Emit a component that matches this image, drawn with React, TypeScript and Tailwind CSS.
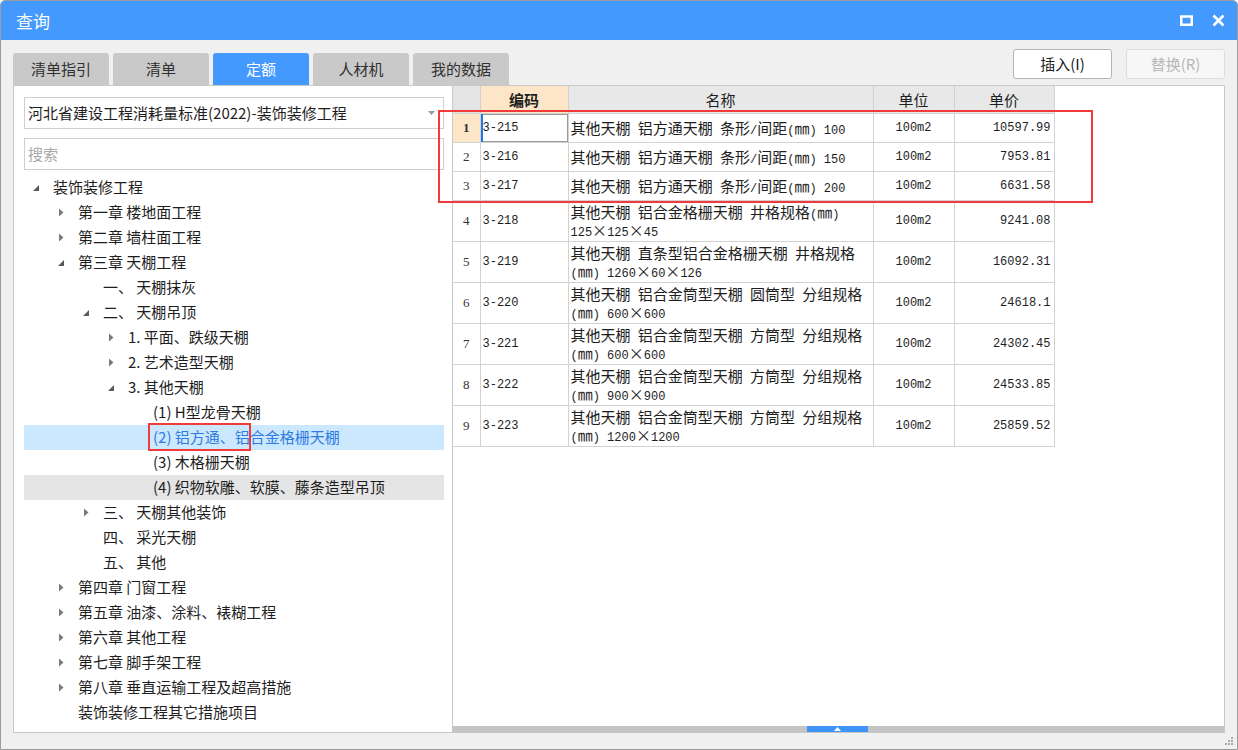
import React from 'react';

type Arrow = 'open' | 'closed' | 'none';

interface TreeNode {
  level: number;
  text: string;
  arrow: Arrow;
  state?: 'selected' | 'hover';
}

const tree: TreeNode[] = [
  { level: 0, text: '装饰装修工程', arrow: 'open' },
  { level: 1, text: '第一章 楼地面工程', arrow: 'closed' },
  { level: 1, text: '第二章 墙柱面工程', arrow: 'closed' },
  { level: 1, text: '第三章 天棚工程', arrow: 'open' },
  { level: 2, text: '一、 天棚抹灰', arrow: 'none' },
  { level: 2, text: '二、 天棚吊顶', arrow: 'open' },
  { level: 3, text: '1. 平面、跌级天棚', arrow: 'closed' },
  { level: 3, text: '2. 艺术造型天棚', arrow: 'closed' },
  { level: 3, text: '3. 其他天棚', arrow: 'open' },
  { level: 4, text: '(1) H型龙骨天棚', arrow: 'none' },
  { level: 4, text: '(2) 铝方通、铝合金格栅天棚', arrow: 'none', state: 'selected' },
  { level: 4, text: '(3) 木格栅天棚', arrow: 'none' },
  { level: 4, text: '(4) 织物软雕、软膜、藤条造型吊顶', arrow: 'none', state: 'hover' },
  { level: 2, text: '三、 天棚其他装饰', arrow: 'closed' },
  { level: 2, text: '四、 采光天棚', arrow: 'none' },
  { level: 2, text: '五、 其他', arrow: 'none' },
  { level: 1, text: '第四章 门窗工程', arrow: 'closed' },
  { level: 1, text: '第五章 油漆、涂料、裱糊工程', arrow: 'closed' },
  { level: 1, text: '第六章 其他工程', arrow: 'closed' },
  { level: 1, text: '第七章 脚手架工程', arrow: 'closed' },
  { level: 1, text: '第八章 垂直运输工程及超高措施', arrow: 'closed' },
  { level: 1, text: '装饰装修工程其它措施项目', arrow: 'none' },
];

interface Row {
  code: string;
  name: string[];
  unit: string;
  price: string;
}

const rows: Row[] = [
  { code: '3-215', name: ['其他天棚 铝方通天棚 条形/间距(㎜) 100'], unit: '100m2', price: '10597.99' },
  { code: '3-216', name: ['其他天棚 铝方通天棚 条形/间距(㎜) 150'], unit: '100m2', price: '7953.81' },
  { code: '3-217', name: ['其他天棚 铝方通天棚 条形/间距(㎜) 200'], unit: '100m2', price: '6631.58' },
  { code: '3-218', name: ['其他天棚 铝合金格栅天棚 井格规格(㎜)', '125×125×45'], unit: '100m2', price: '9241.08' },
  { code: '3-219', name: ['其他天棚 直条型铝合金格栅天棚 井格规格', '(㎜) 1260×60×126'], unit: '100m2', price: '16092.31' },
  { code: '3-220', name: ['其他天棚 铝合金筒型天棚 圆筒型 分组规格', '(㎜) 600×600'], unit: '100m2', price: '24618.1' },
  { code: '3-221', name: ['其他天棚 铝合金筒型天棚 方筒型 分组规格', '(㎜) 600×600'], unit: '100m2', price: '24302.45' },
  { code: '3-222', name: ['其他天棚 铝合金筒型天棚 方筒型 分组规格', '(㎜) 900×900'], unit: '100m2', price: '24533.85' },
  { code: '3-223', name: ['其他天棚 铝合金筒型天棚 方筒型 分组规格', '(㎜) 1200×1200'], unit: '100m2', price: '25859.52' },
];

const tabs = ['清单指引', '清单', '定额', '人材机', '我的数据'];

// ascii runs in a narrow mono face, CJK in the sans face
const Mixed = ({ text }: { text: string }) => (
  <>
    {text.split(/([\x20-\x7e]+)/).map((part, i) =>
      /^[\x20-\x7e]+$/.test(part) ? (
        <span key={i} className="font-['Liberation_Mono',monospace] text-[12px] whitespace-pre">
          {part}
        </span>
      ) : (
        <span key={i}>{part}</span>
      )
    )}
  </>
);

const TreeArrow = ({ kind }: { kind: Arrow }) => {
  if (kind === 'open')
    return (
      <svg width="8" height="8" viewBox="0 0 8 8">
        <polygon points="7,1 7,7 1,7" fill="#5a5a5a" />
      </svg>
    );
  if (kind === 'closed')
    return (
      <svg width="8" height="9" viewBox="0 0 8 9">
        <polygon points="2,0.5 6.5,4.5 2,8.5" fill="#7a7a7a" />
      </svg>
    );
  return null;
};

const levelPad = ['pl-[8px]', 'pl-[33px]', 'pl-[58px]', 'pl-[83px]', 'pl-[108px]'];

export default function App() {
  return (
    <div className="relative w-[1238px] h-[750px] overflow-hidden bg-[#f0f0f0] border border-[#9c9c9c] rounded-t-[5px] flex flex-col font-['Noto_Sans_CJK_SC','Noto_Sans',sans-serif] text-[#1e1e1e]">
      {/* title bar */}
      <div className="h-[39px] shrink-0 bg-[#4499ff] flex items-center justify-between pl-[15px] pr-[12px]">
        <span className="text-white text-[17px]">查询</span>
        <div className="flex items-center gap-[19px]">
          <svg width="13" height="11" viewBox="0 0 13 11">
            <rect x="1.25" y="1.5" width="10.5" height="8.25" fill="none" stroke="white" strokeWidth="2.5" />
          </svg>
          <svg width="13" height="13" viewBox="0 0 13 13">
            <path d="M1.5 1.5 L11.5 11.5 M11.5 1.5 L1.5 11.5" stroke="white" strokeWidth="2.6" />
          </svg>
        </div>
      </div>

      <div className="flex-1 flex flex-col px-[12px]">
        {/* tabs and buttons */}
        <div className="h-[45px] shrink-0 flex justify-between">
          <div className="flex gap-[4px] mt-[13px]">
            {tabs.map((t) => (
              <div
                key={t}
                className={
                  t === '定额'
                    ? 'w-[96px] h-[32px] rounded-t-[3px] bg-[#4499ff] text-white text-[15px] flex items-center justify-center'
                    : 'w-[96px] h-[32px] rounded-t-[3px] bg-[#c9c9c9] text-[#303030] text-[15px] flex items-center justify-center'
                }
              >
                {t}
              </div>
            ))}
          </div>
          <div className="flex gap-[14px] mt-[9px]">
            <button className="w-[99px] h-[30px] bg-white border border-[#b4b4b4] rounded-[3px] text-[15px] text-[#222]">
              插入(I)
            </button>
            <button className="w-[99px] h-[30px] bg-[#f7f7f7] border border-[#dcdcdc] rounded-[3px] text-[15px] text-[#b8b8b8]">
              替换(R)
            </button>
          </div>
        </div>

        {/* main */}
        <div className="h-[648px] flex">
          {/* left tree panel */}
          <div className="w-[440px] bg-white border border-[#c8c8c8] pl-[10px] pr-[8px] pt-[11px] flex flex-col">
            <div className="h-[32px] border border-[#cfcfcf] flex items-center justify-between pl-[3px] pr-[8px] text-[15px]">
              <span>河北省建设工程消耗量标准(2022)-装饰装修工程</span>
              <svg width="7" height="4" viewBox="0 0 7 4">
                <polygon points="0,0 7,0 3.5,4" fill="#9a9a9a" />
              </svg>
            </div>
            <div className="h-[32px] mt-[9px] border border-[#cfcfcf] flex items-center pl-[3px] text-[15px] text-[#a8a8a8]">
              搜索
            </div>
            <div className="mt-[5px] flex flex-col">
              {tree.map((n, i) => (
                <div
                  key={i}
                  className={`h-[25px] flex items-center text-[15px] ${levelPad[n.level]} ${
                    n.state === 'selected'
                      ? 'bg-[#cce8ff] text-[#2f7be0]'
                      : n.state === 'hover'
                      ? 'bg-[#e5e5e5]'
                      : ''
                  }`}
                >
                  <span className="w-[21px] shrink-0 flex items-center">
                    <TreeArrow kind={n.arrow} />
                  </span>
                  <span className="whitespace-pre">{n.text}</span>
                </div>
              ))}
            </div>
          </div>

          {/* right table panel */}
          <div className="flex-1 bg-white border border-[#c8c8c8] border-l-0 flex flex-col">
            <div className="flex-1">
              <table className="table-fixed border-collapse w-[601px] text-[15px]">
                <colgroup>
                  <col className="w-[27px]" />
                  <col className="w-[88px]" />
                  <col className="w-[305px]" />
                  <col className="w-[81px]" />
                  <col className="w-[100px]" />
                </colgroup>
                <thead>
                  <tr className="h-[27px]">
                    <th className="p-0 bg-[#e4e4e4] border border-[#d2d2d2] border-l-0 border-t-0" />
                    <th className="p-0 leading-[25px] bg-[#fde6c8] border border-[#d2d2d2] border-t-0 font-bold">编码</th>
                    <th className="p-0 leading-[25px] bg-[#e8e8e8] border border-[#d2d2d2] border-t-0 font-normal">名称</th>
                    <th className="p-0 leading-[25px] bg-[#e8e8e8] border border-[#d2d2d2] border-t-0 font-normal">单位</th>
                    <th className="p-0 leading-[25px] bg-[#e8e8e8] border border-[#d2d2d2] border-t-0 font-normal">单价</th>
                  </tr>
                </thead>
                <tbody>
                  {rows.map((r, i) => (
                    <tr key={r.code} className={i < 3 ? 'h-[29px]' : 'h-[41px]'}>
                      <td
                        className={`p-0 border border-[#d2d2d2] border-l-0 text-center font-['Liberation_Serif',serif] text-[13px] text-[#333] ${
                          i === 0 ? 'bg-[#fde6c8] font-bold' : ''
                        }`}
                      >
                        {i + 1}
                      </td>
                      <td
                        className={`p-0 pl-[2px] border border-[#d2d2d2] font-['Liberation_Mono',monospace] text-[12px] ${
                          i === 0 ? 'shadow-[inset_2px_0_0_#1f7ae6,inset_0_0_0_1px_#9a9a9a]' : ''
                        }`}
                      >
                        {r.code}
                      </td>
                      <td className="p-0 pl-[2px] border border-[#d2d2d2]">
                        {r.name.map((line, k) => (
                          <div key={k} className="h-[18px] leading-[18px] whitespace-nowrap overflow-visible">
                            <Mixed text={line} />
                          </div>
                        ))}
                      </td>
                      <td className="p-0 border border-[#d2d2d2] text-center font-['Liberation_Mono',monospace] text-[12px]">
                        {r.unit}
                      </td>
                      <td className="p-0 pr-[3px] border border-[#d2d2d2] text-right font-['Liberation_Mono',monospace] text-[12px]">
                        {r.price}
                      </td>
                    </tr>
                  ))}
                </tbody>
              </table>
            </div>
            {/* horizontal scrollbar */}
            <div className="h-[6px] bg-[#c4c4c4] flex">
              <div className="ml-[354px] w-[61px] h-[6px] bg-[#3d94f6] flex items-center justify-center">
                <svg width="7" height="4" viewBox="0 0 7 4">
                  <polygon points="3.5,0 7,4 0,4" fill="white" />
                </svg>
              </div>
            </div>
          </div>
        </div>
      </div>

      {/* resize grip */}
      <svg className="absolute right-[3px] bottom-[3px]" width="10" height="10" viewBox="0 0 10 10">
        <rect x="7" y="1" width="2" height="2" fill="#a8a8a8" />
        <rect x="4" y="4" width="2" height="2" fill="#a8a8a8" />
        <rect x="7" y="4" width="2" height="2" fill="#a8a8a8" />
        <rect x="1" y="7" width="2" height="2" fill="#a8a8a8" />
        <rect x="4" y="7" width="2" height="2" fill="#a8a8a8" />
        <rect x="7" y="7" width="2" height="2" fill="#a8a8a8" />
      </svg>

      {/* red annotation boxes */}
      <div className="absolute left-[437px] top-[109px] w-[655px] h-[93px] border-2 border-[#f23a3a] pointer-events-none" />
      <div className="absolute left-[147px] top-[422px] w-[103px] h-[28px] border-2 border-[#f23a3a] pointer-events-none" />
    </div>
  );
}
